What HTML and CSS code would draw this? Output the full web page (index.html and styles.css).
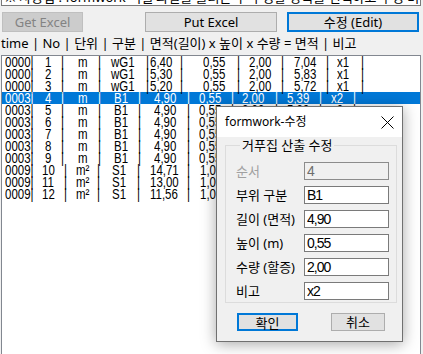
FILE: index.html
```html
<!DOCTYPE html>
<html lang="ko">
<head>
  <meta charset="UTF-8">
  <title>formwork</title>
  <link rel="stylesheet" href="styles.css">
</head>
<body>

  <!-- 상단 안내 (잘려서 보임) -->
  <div class="topbox"><span>※ 사용법 : formwork 엑셀 파일을 불러온 후 수정할 항목을 선택하고 수정 버튼을 누르세요 (Edit)</span></div>

  <div class="toolbar">
    <button class="btn btn-get" disabled>Get Excel</button>
    <button class="btn btn-put">Put Excel</button>
    <button class="btn btn-edit">수정 (Edit)</button>
  </div>

  <div class="caption">time | No | 단위 | 구분 | 면적(길이) x 높이 x 수량 = 면적 | 비고</div>

  <div class="list">
    <div class="row wg"><span>0000|</span><span>1</span><span>|</span><span>m</span><span>|</span><span>wG1</span><span>|</span><span>6,40</span><span>|</span><span>0,55</span><span>|</span><span>2,00</span><span>|</span><span>7,04</span><span>|</span><span>x1</span><span>|</span></div>
    <div class="row wg"><span>0000|</span><span>2</span><span>|</span><span>m</span><span>|</span><span>wG1</span><span>|</span><span>5,30</span><span>|</span><span>0,55</span><span>|</span><span>2,00</span><span>|</span><span>5,83</span><span>|</span><span>x1</span><span>|</span></div>
    <div class="row wg"><span>0000|</span><span>3</span><span>|</span><span>m</span><span>|</span><span>wG1</span><span>|</span><span>5,20</span><span>|</span><span>0,55</span><span>|</span><span>2,00</span><span>|</span><span>5,72</span><span>|</span><span>x1</span><span>|</span></div>
    <div class="row b1 selected"><span>0003|</span><span>4</span><span>|</span><span>m</span><span>|</span><span>B1</span><span>|</span><span>4,90</span><span>|</span><span>0,55</span><span>|</span><span>2,00</span><span>|</span><span>5,39</span><span>|</span><span>x2</span><span>|</span></div>
    <div class="row b1"><span>0003|</span><span>5</span><span>|</span><span>m</span><span>|</span><span>B1</span><span>|</span><span>4,90</span><span>|</span><span>0,55</span><span>|</span><span>2,00</span><span>|</span><span>5,39</span><span>|</span><span>x2</span><span>|</span></div>
    <div class="row b1"><span>0003|</span><span>6</span><span>|</span><span>m</span><span>|</span><span>B1</span><span>|</span><span>4,90</span><span>|</span><span>0,55</span><span>|</span><span>2,00</span><span>|</span><span>5,39</span><span>|</span><span>x2</span><span>|</span></div>
    <div class="row b1"><span>0003|</span><span>7</span><span>|</span><span>m</span><span>|</span><span>B1</span><span>|</span><span>4,90</span><span>|</span><span>0,55</span><span>|</span><span>2,00</span><span>|</span><span>5,39</span><span>|</span><span>x2</span><span>|</span></div>
    <div class="row b1"><span>0003|</span><span>8</span><span>|</span><span>m</span><span>|</span><span>B1</span><span>|</span><span>4,90</span><span>|</span><span>0,55</span><span>|</span><span>2,00</span><span>|</span><span>5,39</span><span>|</span><span>x2</span><span>|</span></div>
    <div class="row b1"><span>0003|</span><span>9</span><span>|</span><span>m</span><span>|</span><span>B1</span><span>|</span><span>4,90</span><span>|</span><span>0,55</span><span>|</span><span>2,00</span><span>|</span><span>5,39</span><span>|</span><span>x2</span><span>|</span></div>
    <div class="row s1"><span>0009|</span><span>10</span><span>|</span><span>m²</span><span>|</span><span>S1</span><span>|</span><span>14,71</span><span>|</span><span>1,00</span><span>|</span><span>1,00</span><span>|</span><span>14,71</span><span>|</span><span>x1</span><span>|</span></div>
    <div class="row s1"><span>0009|</span><span>11</span><span>|</span><span>m²</span><span>|</span><span>S1</span><span>|</span><span>13,00</span><span>|</span><span>1,00</span><span>|</span><span>1,00</span><span>|</span><span>13,00</span><span>|</span><span>x1</span><span>|</span></div>
    <div class="row s1"><span>0009|</span><span>12</span><span>|</span><span>m²</span><span>|</span><span>S1</span><span>|</span><span>11,56</span><span>|</span><span>1,00</span><span>|</span><span>1,00</span><span>|</span><span>11,56</span><span>|</span><span>x1</span><span>|</span></div>
  </div>

  <!-- 수정 대화상자 -->
  <div class="dialog">
    <div class="titlebar">
      <span class="title">formwork-수정</span>
      <svg class="close" width="13" height="13" viewBox="0 0 13 13">
        <path d="M0.5 0.5 L12.5 12.5 M12.5 0.5 L0.5 12.5" stroke="#000" stroke-width="1" fill="none"/>
      </svg>
    </div>
    <div class="dialog-body">
      <fieldset class="group">
        <legend>거푸집 산출 수정</legend>
        <div class="field disabled"><label>순서</label><input type="text" value="4" disabled></div>
        <div class="field"><label>부위 구분</label><input type="text" value="B1"></div>
        <div class="field"><label>길이 (면적)</label><input type="text" value="4,90"></div>
        <div class="field"><label>높이 (m)</label><input type="text" value="0,55"></div>
        <div class="field"><label>수량 (할증)</label><input type="text" value="2,00"></div>
        <div class="field"><label>비고</label><input type="text" value="x2"></div>
      </fieldset>
      <div class="dialog-buttons">
        <button class="btn btn-ok">확인</button>
        <button class="btn btn-cancel">취소</button>
      </div>
    </div>
  </div>

</body>
</html>
```

FILE: styles.css
```css
body {
  margin: 0;
  width: 423px;
  height: 354px;
  overflow: hidden;
  position: relative;
  background-color: #f0f0f0;
  font-family: "Noto Sans", "Noto Sans CJK KR", sans-serif;
  color: #000;
}

.topbox {
  height: 5px;
  margin: 0 2px 0 1px;
  border: 1px solid #7a7a7a;
  border-top: none;
  background-color: #fff;
  overflow: hidden;
}

.topbox span {
  display: block;
  margin-top: -11px;
  padding-left: 3px;
  font-size: 13px;
  line-height: 16px;
  white-space: nowrap;
}

.toolbar {
  display: flex;
  margin-top: 6px;
  padding-left: 2px;
  height: 20px;
}

.btn {
  font-family: "Noto Sans", "Noto Sans CJK KR", sans-serif;
  font-size: 13px;
  line-height: 16px;
  padding: 0;
  background-color: #e1e1e1;
  border: 1px solid #adadad;
  color: #000;
}

.btn-get {
  width: 81px;
  background-color: #cccccc;
  border-color: #bfbfbf;
  color: #838383;
}

.btn-put {
  width: 132px;
  margin-left: 62px;
}

.btn-edit {
  width: 132px;
  margin-left: 10px;
  border: 2px solid #0078d7;
}

.caption {
  margin-top: 3px;
  padding-left: 1px;
  font-size: 13px;
  line-height: 16px;
  white-space: nowrap;
}

.list {
  margin: 4px 2px 0 1px;
  height: 298px;
  border: 1px solid #828790;
  border-bottom: none;
  background-color: #fff;
  overflow: hidden;
}

/* 목록 글꼴은 좁은 글꼴(Arial Narrow 비슷하게) */
.row {
  display: grid;
  height: 12px;
  padding-left: 3px;
  font-family: "Liberation Sans", Arial, sans-serif;
  font-size: 14px;
  line-height: 12px;
  white-space: nowrap;
}

.row span {
  transform: scaleX(0.82);
  transform-origin: 0 0;
}

.row.wg {
  grid-template-columns: 40px 16px 17px 20px 13px 35px 4px 30px 23px 34px 12px 32px 13px 32px 11px 24px auto;
}

.row.b1 {
  grid-template-columns: 40px 16px 17px 20px 16px 24px 16px 33px 12px 32px 11px 33px 12px 32px 12px 22px auto;
}

.row.s1 {
  grid-template-columns: 37px 22px 12px 21px 15px 25px 13px 37px 13px 33px 12px 33px 12px 35px 12px 22px auto;
}

.row.selected {
  background-color: #0078d7;
  color: #fff;
}

.dialog {
  position: absolute;
  left: 216px;
  top: 106px;
  width: 185px;
  height: 234px;
  border: 1px solid #707070;
  background-color: #f0f0f0;
  box-shadow: 0 2px 14px rgba(0, 0, 0, 0.35);
}

.titlebar {
  display: flex;
  align-items: center;
  height: 30px;
  padding: 0 8px 0 8px;
  background-color: #fff;
}

.title {
  font-size: 12px;
  line-height: 16px;
}

.close {
  margin-left: auto;
}

.dialog-body {
  padding: 0 5px 0 8px;
}

.group {
  margin: 0;
  padding: 9px 0 1px 10px;
  border: 1px solid #dcdcdc;
}

.group legend {
  padding: 0 2px;
  margin-left: 4px;
  font-size: 13px;
  line-height: 16px;
}

.field {
  display: flex;
  align-items: center;
  height: 18px;
  margin-bottom: 6px;
}

.field:last-child {
  margin-bottom: 1px;
}

.field label {
  width: 68px;
  font-size: 13px;
  line-height: 16px;
}

.field input {
  box-sizing: border-box;
  width: 85px;
  height: 18px;
  margin: 0;
  padding: 0 2px;
  border: 1px solid #7a7a7a;
  background-color: #fff;
  font-family: "Liberation Sans", Arial, sans-serif;
  font-size: 14px;
  letter-spacing: -1px;
  color: #000;
  outline: none;
}

.field.disabled label {
  color: #a0a0a0;
}

.field.disabled input {
  background-color: #f0f0f0;
  border-color: #8c8c8c;
  color: #6d6d6d;
}

.dialog-buttons {
  display: flex;
  margin-top: 10px;
  padding-left: 12px;
}

.btn-ok {
  width: 61px;
  height: 18px;
  border: 2px solid #0078d7;
}

.btn-cancel {
  width: 54px;
  height: 18px;
  margin-left: 33px;
}
```
